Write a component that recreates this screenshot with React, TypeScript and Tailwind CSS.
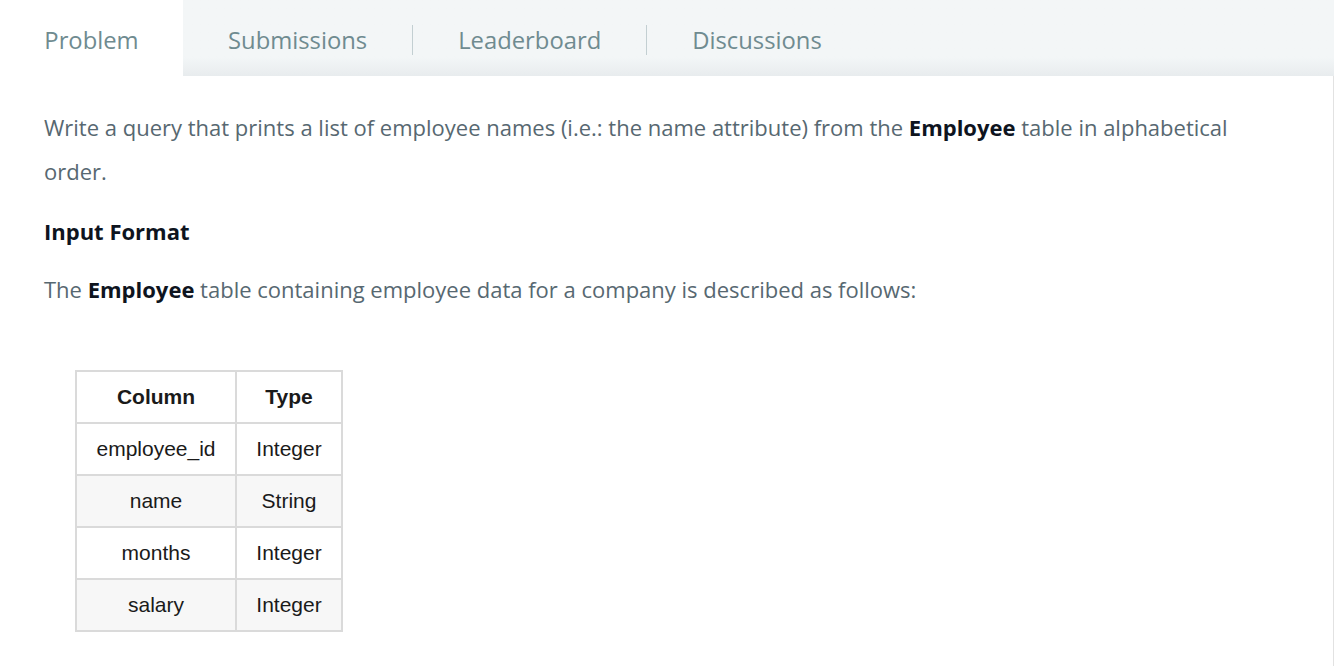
import React from 'react';

const tabs = ['Submissions', 'Leaderboard', 'Discussions'];

const rows = [
  { column: 'employee_id', type: 'Integer' },
  { column: 'name', type: 'String' },
  { column: 'months', type: 'Integer' },
  { column: 'salary', type: 'Integer' },
];

function TabBar() {
  return (
    <div className="flex h-[76px] bg-gradient-to-b from-[#f3f6f7] from-75% to-[#e8ecee]">
      <div className="flex w-[183px] items-center justify-center bg-white pt-[5px] text-[23.8px] text-[#6f8b90]">
        Problem
      </div>
      {tabs.map((tab, i) => (
        <div key={tab} className="flex items-center pt-[5px]">
          {i > 0 && <span className="mt-[-2px] h-[30px] w-px bg-[#c3cfd2]" />}
          <span className="px-[45px] text-[23.8px] text-[#6f8b90]">{tab}</span>
        </div>
      ))}
    </div>
  );
}

function SchemaTable() {
  return (
    <table
      className="ml-[31px] border-collapse border-2 border-[#dadada] text-[21px] text-[#1a1a1a]"
      style={{ fontFamily: '"Liberation Sans", Arial, sans-serif' }}
    >
      <thead>
        <tr className="h-[52px]">
          <th className="w-[160px] border-2 border-[#dadada] font-bold">Column</th>
          <th className="w-[106px] border-2 border-[#dadada] font-bold">Type</th>
        </tr>
      </thead>
      <tbody>
        {rows.map((row, i) => (
          <tr key={row.column} className={`h-[52px] ${i % 2 === 1 ? 'bg-[#f7f7f7]' : 'bg-white'}`}>
            <td className="border-2 border-[#dadada] text-center">{row.column}</td>
            <td className="border-2 border-[#dadada] text-center">{row.type}</td>
          </tr>
        ))}
      </tbody>
    </table>
  );
}

export default function App() {
  return (
    <div
      className="h-[666px] w-[1334px] overflow-hidden bg-white"
      style={{ fontFamily: '"Open Sans", sans-serif' }}
    >
      <TabBar />
      <div className="h-[590px] border-r border-[#e2e2e2] px-[44px] pt-[29px] text-[22px] text-[#576871]">
        <p className="leading-[44px]">
          Write a query that prints a list of employee names (i.e.: the name attribute) from the{' '}
          <span className="font-bold text-[#0e141e]">Employee</span> table in alphabetical order.
        </p>
        <h3 className="mt-[16px] text-[22px] font-bold leading-[44px] text-[#0e141e]">Input Format</h3>
        <p className="mt-[14px] leading-[44px]">
          The <span className="font-bold text-[#0e141e]">Employee</span> table containing employee data for a
          company is described as follows:
        </p>
        <div className="mt-[59px]">
          <SchemaTable />
        </div>
      </div>
    </div>
  );
}
